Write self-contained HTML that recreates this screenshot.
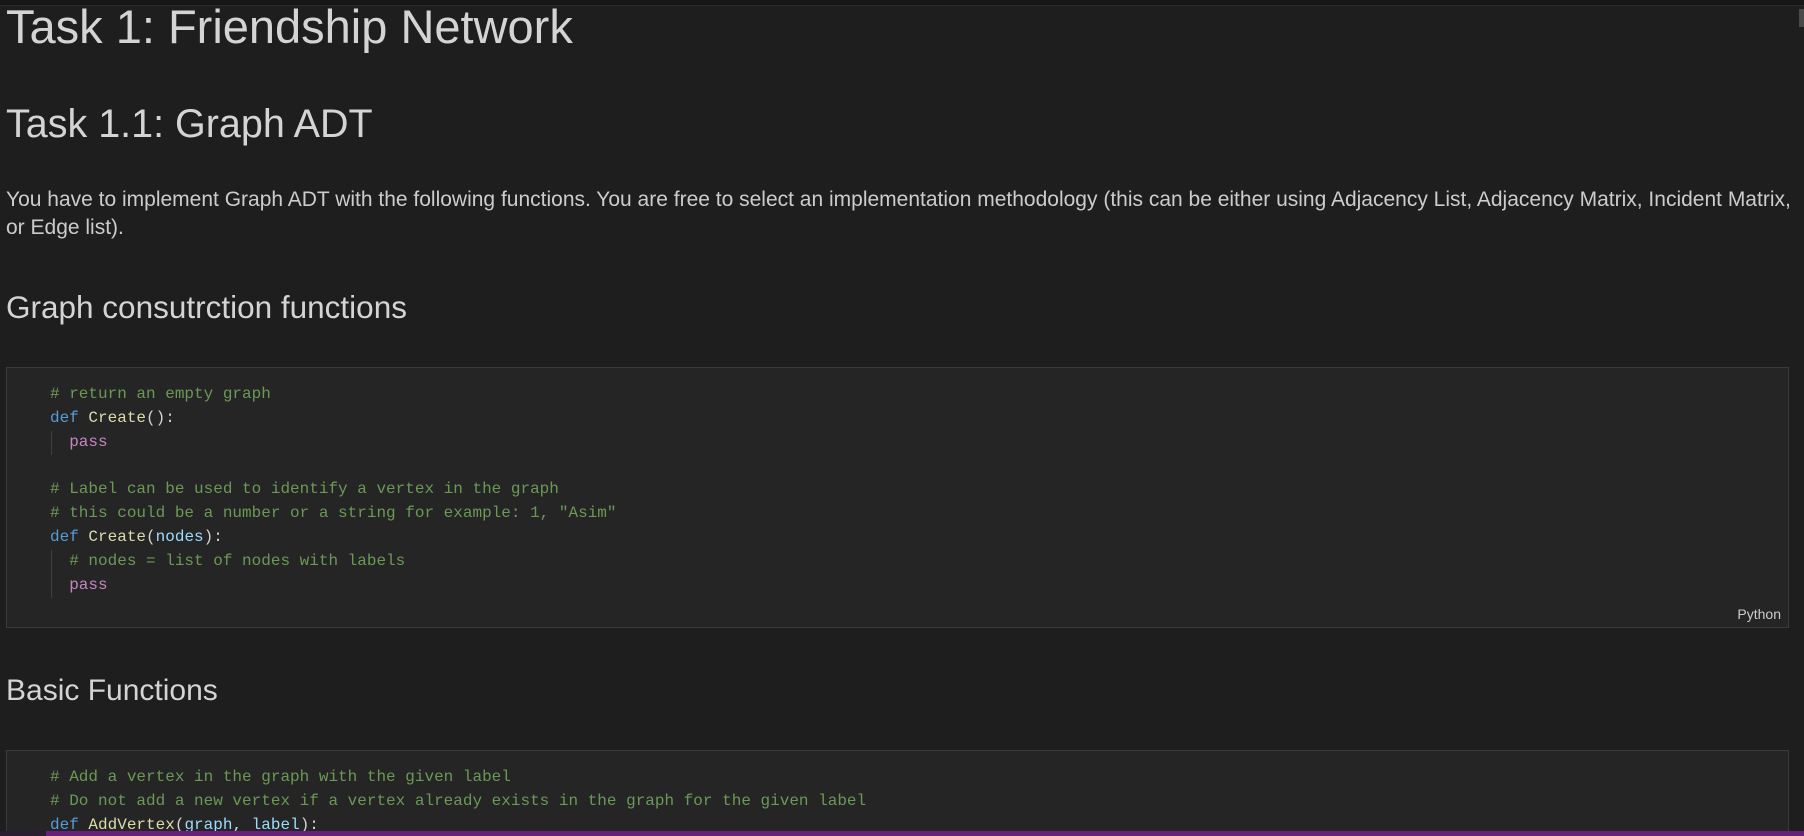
<!DOCTYPE html>
<html><head><meta charset="utf-8"><style>
html,body{margin:0;padding:0;background:#1e1e1e;width:1804px;height:836px;overflow:hidden;position:relative;font-family:"Liberation Sans",sans-serif;color:#d0d0d0}
.a{position:absolute;white-space:nowrap;line-height:1}
.code{position:absolute;left:6px;width:1783px;background:#252526;border:1px solid #3a3a3a;box-sizing:border-box}
.ln{position:absolute;left:50px;font-family:"Liberation Mono",monospace;font-size:16px;line-height:23.8px;white-space:pre;color:#d4d4d4}
.c{color:#6a9955}.k{color:#569cd6}.f{color:#dcdcaa}.p{color:#c586c0}.v{color:#9cdcfe}
.guide{position:absolute;left:51px;width:1px;background:#404040}
</style></head><body>
<div style="position:absolute;left:0;top:0;width:1804px;height:5px;background:#161616;border-bottom:1px solid #2a2a2a"></div>
<div style="position:absolute;left:1799px;top:9px;width:5px;height:18px;background:#4a4a4a"></div>
<div class="a" style="left:6px;top:3px;font-size:47px;color:#d4d4d4">Task 1: Friendship Network</div>
<div class="a" style="left:6px;top:105px;font-size:39.5px;color:#d4d4d4">Task 1.1: Graph ADT</div>
<div class="a" style="left:6px;top:186px;font-size:21px;line-height:28px;color:#cccccc">You have to implement Graph ADT with the following functions. You are free to select an implementation methodology (this can be either using Adjacency List, Adjacency Matrix, Incident Matrix,<br>or Edge list).</div>
<div class="a" style="left:6px;top:292px;font-size:31.5px;color:#d4d4d4">Graph consutrction functions</div>
<div class="code" style="top:367px;height:261px">
<span class="a" style="right:7px;top:239px;font-size:14px;color:#cccccc">Python</span>
</div>
<div class="guide" style="top:431px;height:24px"></div>
<div class="guide" style="top:550px;height:48px"></div>
<div class="ln" style="top:383px"><span class="c"># return an empty graph</span></div>
<div class="ln" style="top:407px"><span class="k">def</span> <span class="f">Create</span>():</div>
<div class="ln" style="top:431px">  <span class="p">pass</span></div>
<div class="ln" style="top:478px"><span class="c"># Label can be used to identify a vertex in the graph</span></div>
<div class="ln" style="top:502px"><span class="c"># this could be a number or a string for example: 1, "Asim"</span></div>
<div class="ln" style="top:526px"><span class="k">def</span> <span class="f">Create</span>(<span class="v">nodes</span>):</div>
<div class="ln" style="top:550px">  <span class="c"># nodes = list of nodes with labels</span></div>
<div class="ln" style="top:574px">  <span class="p">pass</span></div>
<div class="a" style="left:6px;top:676px;font-size:30px;color:#d4d4d4">Basic Functions</div>
<div class="code" style="top:750px;height:100px"></div>
<div class="ln" style="top:766px"><span class="c"># Add a vertex in the graph with the given label</span></div>
<div class="ln" style="top:790px"><span class="c"># Do not add a new vertex if a vertex already exists in the graph for the given label</span></div>
<div class="ln" style="top:814px"><span class="k">def</span> <span class="f">AddVertex</span>(<span class="v">graph</span>, <span class="v">label</span>):</div>
<div style="position:absolute;left:0;top:831px;width:46px;height:5px;background:#2a1f30"></div>
<div style="position:absolute;left:46px;top:831px;width:1758px;height:5px;background:#68217a"></div>
</body></html>
